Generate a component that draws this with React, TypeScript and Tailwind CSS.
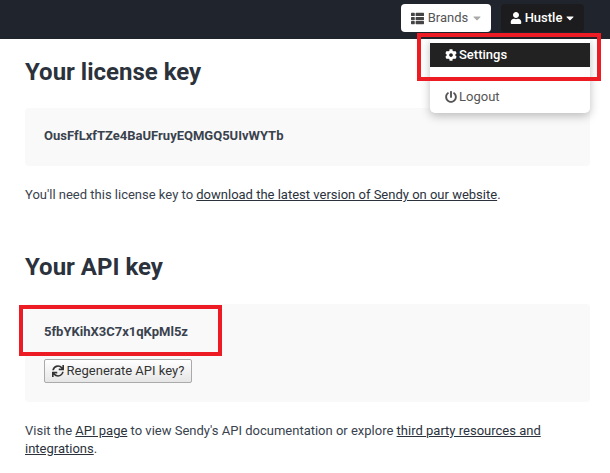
import { FaThList, FaUser, FaCog, FaPowerOff, FaSync, FaCaretDown } from "react-icons/fa";

const App = () => {
  return (
    <div className="relative h-[473px] w-[610px] overflow-hidden bg-white font-['Roboto',sans-serif] text-[13px] text-[#39424e]">
      {/* Top bar */}
      <header className="flex h-[39px] items-center justify-end gap-[10px] bg-[#20242c] pr-[26px] pb-[3px]">
        <button className="flex h-[28px] w-[90px] items-center justify-center gap-[4px] rounded-[4px] bg-white pl-[1px] text-[#555]">
          <FaThList className="h-[13px] w-[13px] text-[#444]" />
          Brands
          <FaCaretDown className="h-[12px] w-[10px] text-[#aaa]" />
        </button>
        <button className="flex h-[28px] w-[83px] items-center justify-center gap-[3px] rounded-[4px] bg-[#1c1c1e] font-medium text-white">
          <FaUser className="h-[12px] w-[12px]" />
          Hustle
          <FaCaretDown className="h-[12px] w-[10px]" />
        </button>
      </header>

      {/* Brands menu */}
      <div className="absolute left-[430px] top-[39px] h-[74px] w-[160px] rounded-b-[5px] bg-white pt-[4px] shadow-[0_3px_10px_rgba(0,0,0,0.25)]">
        <div className="flex h-[24px] items-center gap-[2px] bg-[#222] pl-[15px] font-medium text-white">
          <FaCog className="h-[12px] w-[12px]" />
          Settings
        </div>
        <div className="mt-[20px] flex items-center gap-[2px] pl-[15px] text-[#555]">
          <FaPowerOff className="h-[12px] w-[12px]" />
          Logout
        </div>
      </div>

      <main className="pr-[20px] pl-[25px]">
        <h1 className="mt-[17px] text-[24px] leading-[32px] font-bold text-[#2b323c]">Your license key</h1>
        <div className="mt-[20px] flex h-[58px] items-center rounded-[4px] bg-[#f9f9f9] pb-[2px] pl-[19px] font-bold">
          OusFfLxfTZe4BaUFruyEQMGQ5UIvWYTb
        </div>
        <p className="mt-[19px] leading-[20px]">
          You'll need this license key to{" "}
          <a className="text-[#2b323c] underline">download the latest version of Sendy on our website</a>.
        </p>

        <h1 className="mt-[46px] text-[24px] leading-[32px] font-bold text-[#2b323c]">Your API key</h1>
        <div className="mt-[21px] h-[98px] rounded-[4px] bg-[#f9f9f9] pt-[19px] pl-[19px]">
          <div className="leading-[18px] font-bold">5fbYKihX3C7x1qKpMl5z</div>
          <button className="mt-[18px] flex h-[24px] w-[148px] items-center justify-center gap-[3px] rounded-[2px] border border-[#aaa] bg-gradient-to-b from-white to-[#e6e6e6] text-[#333]">
            <FaSync className="h-[12px] w-[12px]" />
            Regenerate API key?
          </button>
        </div>
        <p className="mt-[20px] leading-[18px]">
          Visit the <a className="text-[#2b323c] underline">API page</a> to view Sendy's API documentation or explore{" "}
          <a className="text-[#2b323c] underline">third party resources and integrations</a>.
        </p>
      </main>

      {/* Annotations */}
      <div className="absolute left-[417px] top-[33px] h-[48px] w-[184px] border-[4px] border-[#ed1c24]" />
      <div className="absolute left-[19px] top-[305px] h-[51px] w-[203px] border-[4px] border-[#ed1c24]" />
    </div>
  );
};

export default App;
